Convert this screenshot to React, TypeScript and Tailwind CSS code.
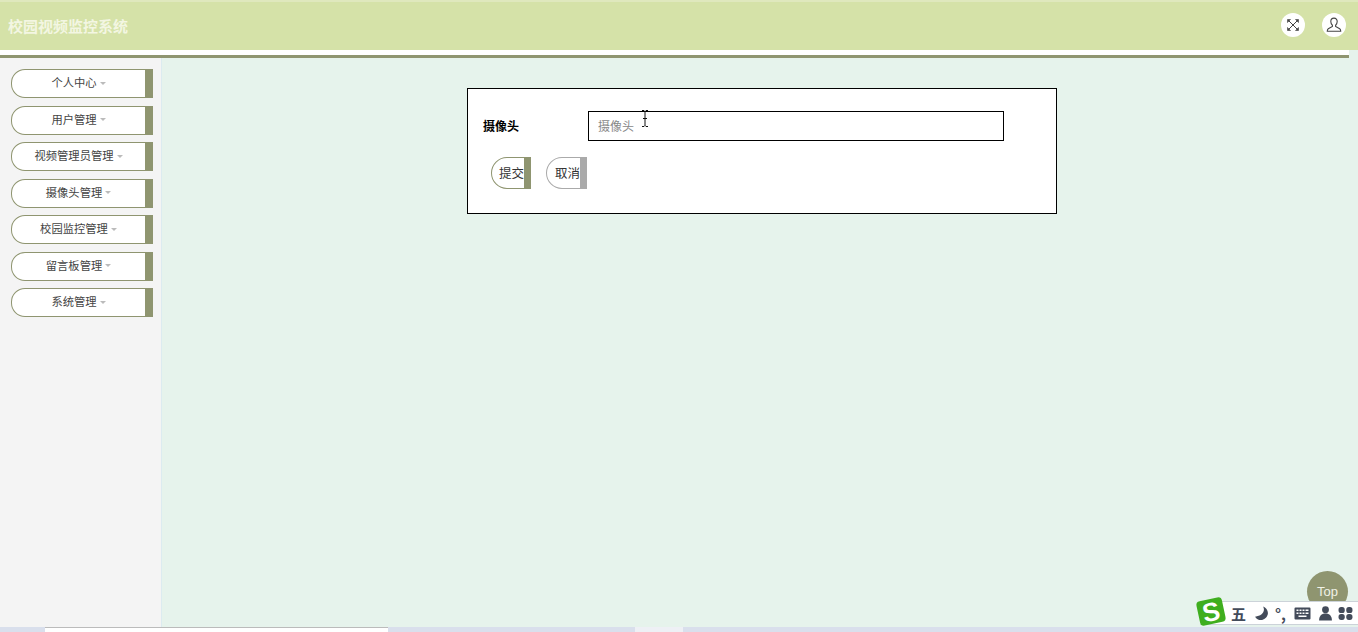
import React from 'react';

const menus = ['个人中心', '用户管理', '视频管理员管理', '摄像头管理', '校园监控管理', '留言板管理', '系统管理'];
const font = 'font-["Noto_Sans_CJK_SC","Liberation_Sans",sans-serif]';

const App: React.FC = () => {
  return (
    <div className={`relative flex h-[632px] w-[1358px] flex-col overflow-hidden bg-[#e6f3ec] ${font}`}>
      <header className="flex h-[50px] items-center justify-between border-t-2 border-[#dfe8bd] bg-[#d5e2a8] pl-2 pr-3">
        <span className="text-[15px] font-bold text-[#f3f6e2]">校园视频监控系统</span>
        <div className="mb-[2px] flex items-center gap-[17px]">
          <button className="flex h-6 w-6 items-center justify-center rounded-full bg-white">
            <svg width="14" height="14" viewBox="0 0 14 14" fill="#444" stroke="#444" strokeWidth="1">
              <path d="M3 3l8 8M11 3l-8 8" fill="none" />
              <path d="M1.500 1.500h3l-3 3zM12.500 1.500h-3l3 3zM1.500 12.500h3l-3-3zM12.500 12.500h-3l3-3z" strokeWidth="0.6" />
            </svg>
          </button>
          <button className="flex h-6 w-6 items-center justify-center rounded-full bg-white">
            <svg width="16" height="16" viewBox="0 0 14 14" fill="none" stroke="#444" strokeWidth="0.95">
              <path d="M7 1c-1.800 0-2.800 1.300-2.800 3 0 1.300.6 2.500 1.400 3.200v1L2 10.300c-.6.4-.9.9-.9 2.200h11.800c0-1.300-.3-1.800-.9-2.200L8.400 8.200v-1c.8-.7 1.400-1.900 1.400-3.200C9.800 2.300 8.800 1 7 1z" />
            </svg>
          </button>
        </div>
      </header>
      <div className="h-[5px] w-[1349px] bg-white" />
      <div className="h-[3px] w-[1349px] bg-[#8f9570]" />

      <div className="flex min-h-0 flex-1">
        <aside className="flex w-[162px] flex-col gap-[7.5px] border-r border-[#dcebf0] bg-[#f4f4f4] pl-[11px] pr-2 pt-[11px]">
          {menus.map((m) => (
            <div
              key={m}
              className="flex h-[29px] w-[142px] items-center justify-center rounded-l-[14px] border border-r-8 border-[#8f9570] bg-white pb-[2px] text-[11.300px] text-[#444]"
            >
              {m}
              <span className="ml-[3px] mt-[1px] h-0 w-0 border-x-[3px] border-t-[3px] border-x-transparent border-t-[#bbb]" />
            </div>
          ))}
        </aside>

        <main className="flex-1 pl-[305px] pt-[30px]">
          <form className="h-[126px] w-[590px] border border-black bg-white pl-[15px] pt-[22px]">
            <div className="flex items-center">
              <label className="w-[105px] text-xs font-bold text-black">摄像头</label>
              <input
                placeholder="摄像头"
                className="h-[30px] w-[416px] border border-black px-[9px] pb-[1px] text-xs text-black outline-none placeholder:text-[#888]"
              />
            </div>
            <div className="ml-2 mt-4 flex gap-[15px]">
              <button type="button" className="flex h-8 w-10 items-center rounded-l-2xl border border-r-[7px] border-[#8f9570] bg-white pl-[7px] text-[12.500px] whitespace-nowrap text-[#333]">
                提交
              </button>
              <button type="button" className="flex h-8 w-[41px] items-center rounded-l-2xl border border-r-[7px] border-[#aaa] bg-white pl-2 text-[12.500px] whitespace-nowrap text-[#333]">
                取消
              </button>
            </div>
          </form>
        </main>
      </div>

      <footer className="flex h-[5px] bg-[#d9dfec]">
        <div className="ml-[45px] w-[343px] border-t border-[#bbb] bg-white" />
        <div className="ml-[247px] w-12 bg-[#eef0f5]" />
      </footer>

      {/* mouse cursor */}
      <svg className="absolute left-[641px] top-[110px]" width="8" height="17" viewBox="0 0 8 17" fill="none" stroke="#111" strokeWidth="1">
        <path d="M1 .5h2l1 1 1-1h2M4 1.500v14M1 16.500h2l1-1 1 1h2M2 8.500h4" />
      </svg>

      {/* back to top */}
      <div className="absolute left-[1307px] top-[571px] flex h-[41px] w-[41px] justify-center rounded-full bg-[#8f9570] pt-[12px] font-['Liberation_Sans',sans-serif] text-[13px] leading-[18px] text-[#f1f2e6]">
        Top
      </div>

      {/* input method bar */}
      <div className="absolute left-[1200px] top-[601px] flex h-[24px] w-[158px] items-center border-y border-[#ccd3d9] bg-white pl-[31px] text-[#434b5a]">
        <span className="w-[15px] text-[15px] font-bold leading-none">五</span>
        <svg className="ml-[8px]" width="15" height="15" viewBox="0 0 14 14" fill="currentColor">
          <path d="M8.500 .5c2 3.500 .5 8.500-7.500 9.500 1.500 2.500 4 3.500 6.500 3 3-.6 5.500-3.500 5.500-6.500C13 4 11 1.500 8.500 .5z" />
        </svg>
        <span className="ml-[6px] w-[12px] whitespace-nowrap text-[15px] font-bold leading-none">°,</span>
        <svg className="ml-[7px]" width="17" height="13" viewBox="0 0 17 13" fill="currentColor">
          <path fillRule="evenodd" d="M1.500 .5h14a1 1 0 0 1 1 1v10a1 1 0 0 1-1 1h-14a1 1 0 0 1-1-1v-10a1 1 0 0 1 1-1zM2.500 2.500v1.500h2V2.500zM5.500 2.500v1.500h2V2.500zM8.500 2.500v1.500h2V2.500zM11.500 2.500v1.500h3V2.500zM2.500 5.500v1.500h2V5.500zM5.500 5.500v1.500h2V5.500zM8.500 5.500v1.500h2V5.500zM11.500 5.500v1.500h3V5.500zM4.500 8.500v1.500h8V8.500z" />
        </svg>
        <svg className="ml-[7px]" width="15" height="15" viewBox="0 0 14 14" fill="currentColor">
          <circle cx="7" cy="3.500" r="3.200" />
          <path d="M1 13.500c0-4 2.200-6.500 6-6.500s6 2.500 6 6.500z" />
        </svg>
        <svg className="ml-[5px]" width="15" height="15" viewBox="0 0 14 14" fill="currentColor">
          <rect x="0.500" y="1" width="5.800" height="5.500" rx="2.400" />
          <rect x="7.700" y="1" width="5.800" height="5.500" rx="2.400" />
          <rect x="0.500" y="7.500" width="5.800" height="5.500" rx="2.400" />
          <rect x="7.700" y="7.500" width="5.800" height="5.500" rx="2.400" />
        </svg>
      </div>
      <div className="absolute left-[1198px] top-[599px] flex h-[25px] w-[26px] -rotate-12 items-center justify-center rounded-[4px] bg-[#3fae1f] font-['Liberation_Sans',sans-serif] text-[26px] font-bold leading-none text-white">
        S
      </div>
    </div>
  );
};

export default App;
